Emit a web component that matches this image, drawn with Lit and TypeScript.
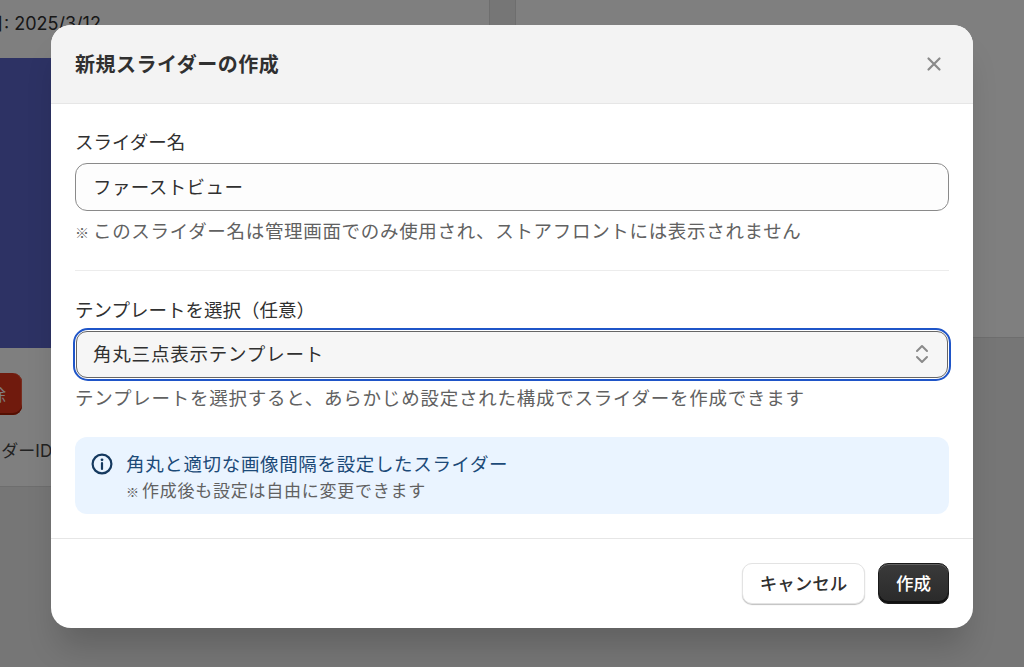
import { LitElement, html, css } from "lit";
import { customElement } from "lit/decorators.js";

@customElement("app-root")
export class AppRoot extends LitElement {
  static styles = css`
    :host { display: block; width: 1024px; height: 667px; position: relative; overflow: hidden; background: #ececec;
      font-family: "Noto Sans CJK JP", "Inter", sans-serif; color: #303030; }
    * { box-sizing: border-box; }
    .page { display: grid; grid-template-columns: 490px 1fr; column-gap: 25px; height: 667px; align-items: start; margin-top: -20px; }
    .card-left { height: 507px; background: #fff; border-right: 1px solid #ddd; border-bottom: 1px solid #ddd; display: flex; flex-direction: column; overflow: hidden; }
    .date { height: 78px; padding: 30px 0 0 0; font-family: "Inter", "Noto Sans CJK JP", sans-serif; font-size: 18px; line-height: 28px; color: #303030; white-space: nowrap; margin-left: -14px; }
    .banner { height: 290px; background: #5a64c8; flex: none; }
    .actions { height: 89px; flex: none; display: flex; align-items: center; }
    .danger { width: 22px; height: 42px; margin-top: 3px; background: #e0341a; border-radius: 0 9px 9px 0; box-shadow: inset 0 -2px 0 #a81e05, inset -1px 0 0 #ef5a3e; overflow: hidden; color: #fff; font-size: 16px; line-height: 42px; white-space: nowrap; }
    .danger span { display: inline-block; margin-left: -10px; }
    .meta { font-family: "Inter", "Noto Sans CJK JP", sans-serif; font-size: 17px; line-height: 28px; margin-left: -49px; white-space: nowrap; color: #444; }
    .card-right { height: 358px; background: #fff; border-left: 1px solid #ddd; border-bottom: 1px solid #ddd; }

    .overlay { position: absolute; inset: 0; background: rgba(0,0,0,.5); display: flex; justify-content: center; align-items: flex-start; padding-top: 25px; }
    .modal { width: 922px; height: 603px; background: #fff; border-radius: 20px; overflow: hidden; display: flex; flex-direction: column;
      box-shadow: 0 26px 32px -8px rgba(0,0,0,.18); }
    .head { height: 79px; flex: none; background: #f3f3f3; border-bottom: 1px solid #e6e6e6; display: flex; align-items: center; justify-content: space-between; padding: 0 31px 0 24px; }
    h2 { margin: 0; font-size: 20px; font-weight: 700; line-height: 28px; letter-spacing: .5px; color: #303030; }
    .close { width: 16px; height: 16px; display: block; }
    .body { flex: 1; padding: 24px 24px 0; display: flex; flex-direction: column; }
    .label { height: 28px; flex: none; font-size: 18.5px; line-height: 26px; color: #303030; margin-bottom: 7px; }
    .label.second { margin-bottom: 4px; }
    .field { height: 48px; flex: none; border: 1px solid #8a8a8a; border-radius: 12px; background: #fdfdfd; display: flex; align-items: center; padding: 0 17px 3px; font-size: 18.5px; letter-spacing: .4px; color: #303030; }
    .hint { height: 28px; flex: none; font-size: 18.5px; line-height: 26px; color: #616161; margin-top: 6px; letter-spacing: .68px; white-space: nowrap; }
    .mark { display: inline-block; width: 18px; line-height: 1; font-size: 14px; font-weight: 700; letter-spacing: 0; }
    .sep { height: 1px; background: #ececec; margin: 25px 0; flex: none; }
    .select-wrap { height: 53px; margin: 0 -2px; border: 2px solid #1f55c8; border-radius: 15px; padding: 1px; flex: none; width: calc(100% + 4px); }
    .select { height: 100%; border: 1px solid #666; border-radius: 11px; background: #f6f6f6; display: flex; align-items: center; justify-content: space-between; padding: 0 17px 0 16px; font-size: 18.5px; letter-spacing: .8px; color: #303030; }
    .select span { padding-bottom: 3px; }
    .chev { width: 16px; height: 22px; display: block; margin-top: -2px; }
    .hint2 { margin-top: 3px; letter-spacing: .76px; }
    .info { height: 77px; margin-top: 25px; flex: none; background: #eaf4ff; border-radius: 12px; display: flex; gap: 13px; padding: 12px 16px; }
    .info svg { width: 22px; height: 22px; flex: none; margin-top: 4px; }
    .info-title { height: 30px; font-size: 18.5px; line-height: 28px; color: #1c4a78; letter-spacing: .65px; white-space: nowrap; }
    .info-sub { height: 24px; font-size: 17px; line-height: 22px; color: #616161; letter-spacing: .75px; white-space: nowrap; }
    .info-sub .mark { width: 16px; font-size: 13px; }
    .foot { height: 90px; flex: none; border-top: 1px solid #e6e6e6; display: flex; align-items: center; justify-content: flex-end; gap: 13px; padding: 0 24px 0 0; }
    button { font: inherit; font-size: 17.5px; font-weight: 500; height: 41px; border-radius: 10px; padding: 0 0 2px; cursor: pointer; line-height: 1; }
    .cancel { width: 123px; background: #fff; color: #303030; border: 1px solid #e3e3e3; box-shadow: 0 1px 1px rgba(0,0,0,.25); }
    .create { width: 71px; background: linear-gradient(#3a3a3a, #2a2a2a); color: #fff; border: 1px solid #1a1a1a; box-shadow: inset 0 1px 0 rgba(255,255,255,.2), inset 0 -2px 0 #111; }
  `;

  render() {
    return html`
      <div class="page">
        <div class="card-left">
          <div class="date">日: 2025/3/12</div>
          <div class="banner"></div>
          <div class="actions"><div class="danger"><span>除</span></div></div>
          <div class="meta">スライダーID</div>
        </div>
        <div class="card-right"></div>
      </div>
      <div class="overlay">
        <div class="modal">
          <div class="head">
            <h2>新規スライダーの作成</h2>
            <svg class="close" viewBox="0 0 16 16" fill="none" stroke="#8a8a8a" stroke-width="2.2" stroke-linecap="round"><path d="M2.5 2.5 13.5 13.5M13.5 2.5 2.5 13.5"/></svg>
          </div>
          <div class="body">
            <div class="label">スライダー名</div>
            <div class="field">ファーストビュー</div>
            <div class="hint"><span class="mark">※</span>このスライダー名は管理画面でのみ使用され、ストアフロントには表示されません</div>
            <div class="sep"></div>
            <div class="label second">テンプレートを選択（任意）</div>
            <div class="select-wrap">
              <div class="select">
                <span>角丸三点表示テンプレート</span>
                <svg class="chev" viewBox="0 0 16 22" fill="none" stroke="#8a8a8a" stroke-width="2" stroke-linecap="round" stroke-linejoin="round"><path d="M3 8 8 3l5 5M3 14l5 5 5-5"/></svg>
              </div>
            </div>
            <div class="hint hint2">テンプレートを選択すると、あらかじめ設定された構成でスライダーを作成できます</div>
            <div class="info">
              <svg viewBox="0 0 22 22" fill="none" stroke="#15395f" stroke-width="2.2"><circle cx="11" cy="11" r="9.4"/><path d="M11 10v6" stroke-linecap="round"/><circle cx="11" cy="6.8" r="1.4" fill="#15395f" stroke="none"/></svg>
              <div>
                <div class="info-title">角丸と適切な画像間隔を設定したスライダー</div>
                <div class="info-sub"><span class="mark">※</span>作成後も設定は自由に変更できます</div>
              </div>
            </div>
          </div>
          <div class="foot">
            <button class="cancel">キャンセル</button>
            <button class="create">作成</button>
          </div>
        </div>
      </div>
    `;
  }
}
